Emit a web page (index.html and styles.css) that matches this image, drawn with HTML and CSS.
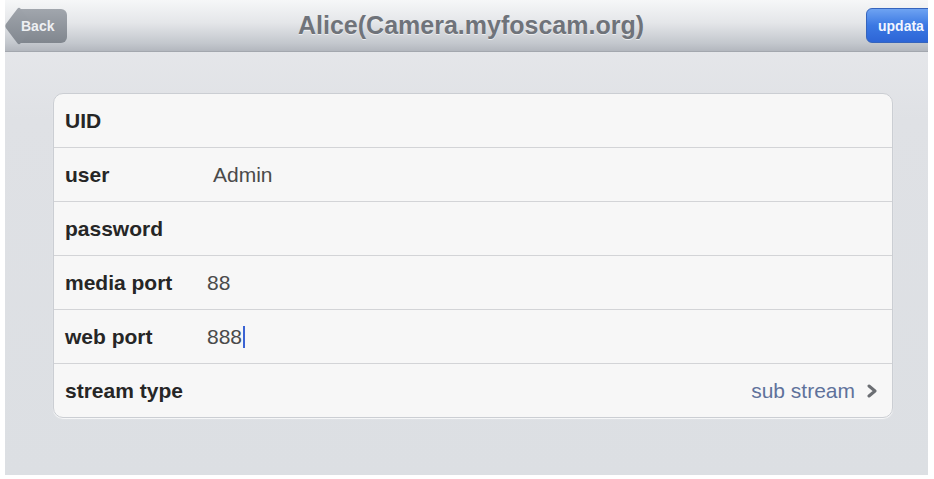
FILE: index.html
```html
<!DOCTYPE html>
<html lang="en">
<head>
    <meta charset="UTF-8">
    <meta name="viewport" content="width=device-width, initial-scale=1.0">
    <title>Camera Settings</title>
    <link rel="stylesheet" href="styles.css">
</head>
<body>
    <div class="screen">
        <div class="navbar">
            <div class="nav-left">
                <button class="back-button">Back</button>
            </div>
            <div class="nav-title">Alice(Camera.myfoscam.org)</div>
            <div class="nav-right">
                <button class="update-button">updata</button>
            </div>
        </div>

        <div class="settings">
            <div class="row">
                <span class="label">UID</span>
            </div>
            <div class="row">
                <span class="label">user</span>
                <span class="value value-shift">Admin</span>
            </div>
            <div class="row">
                <span class="label">password</span>
            </div>
            <div class="row">
                <span class="label">media port</span>
                <span class="value">88</span>
            </div>
            <div class="row">
                <span class="label">web port</span>
                <span class="value">888<span class="caret"></span></span>
            </div>
            <div class="row">
                <span class="label">stream type</span>
                <span class="detail">sub stream</span>
                <svg class="chevron" width="12" height="14" viewBox="0 0 12 14">
                    <path d="M3 2 L9 7 L3 12" fill="none" stroke="#6b6e73" stroke-width="3" stroke-linecap="round" stroke-linejoin="round"/>
                </svg>
            </div>
        </div>
    </div>
</body>
</html>
```

FILE: styles.css
```css
body {
    margin: 0;
    background: #ffffff;
    font-family: 'Liberation Sans', Arial, sans-serif;
}
.screen {
    width: 923px;
    height: 475px;
    margin-left: 5px;
    overflow: hidden;
    background: linear-gradient(180deg, #e9eaed 0px, #dfe1e5 120px, #dcdfe3 100%);
}
.navbar {
    height: 51px;
    display: grid;
    grid-template-columns: 1fr auto 1fr;
    align-items: center;
    background: linear-gradient(180deg, #f6f7f8 0%, #e4e6e9 45%, #c3c7cd 85%, #b3b7be 100%);
    border-bottom: 1px solid #a3a7ae;
}
.nav-left {
    display: flex;
    padding-left: 13px;
}
.nav-right {
    display: flex;
    justify-content: flex-end;
    margin-right: -12px;
}
.back-button {
    position: relative;
    z-index: 0;
    height: 34px;
    width: 49px;
    padding: 0 0 0 3px;
    border: none;
    border-radius: 0 6px 6px 0;
    background: linear-gradient(180deg, #a1a6ad, #80868e);
    color: #eef0f3;
    font-family: 'Liberation Sans', Arial, sans-serif;
    font-size: 14px;
    font-weight: bold;
    text-align: left;
}
.back-button::before {
    content: "";
    position: absolute;
    left: -11px;
    top: 5px;
    width: 24px;
    height: 24px;
    border-radius: 3px;
    transform: rotate(45deg) skew(8deg, 8deg);
    background: linear-gradient(135deg, #a1a6ad, #80868e);
    z-index: -1;
}
.nav-title {
    padding-left: 9px;
    font-size: 25px;
    font-weight: bold;
    color: #6f737a;
    text-shadow: 0 1px 0 rgba(255, 255, 255, 0.6);
}
.update-button {
    height: 35px;
    width: 74px;
    padding: 0 0 0 11px;
    border: 1px solid #3564bd;
    border-radius: 6px;
    background: linear-gradient(180deg, #6ea3f2, #3b78e3 50%, #2d65d6);
    color: #f2f6ff;
    font-family: 'Liberation Sans', Arial, sans-serif;
    font-size: 14px;
    font-weight: bold;
    text-align: left;
}
.settings {
    margin: 41px 35px 0 48px;
    background: #f7f7f7;
    border: 1px solid #cbced3;
    border-radius: 10px;
    box-shadow: 0 1px 1px rgba(255, 255, 255, 0.8);
}
.row {
    height: 53px;
    display: flex;
    align-items: center;
    padding: 0 14px 0 11px;
    border-bottom: 1px solid #d3d4d7;
}
.row:last-child {
    border-bottom: none;
}
.label {
    width: 142px;
    flex-shrink: 0;
    font-size: 21px;
    font-weight: bold;
    color: #262626;
}
.value {
    font-size: 21px;
    color: #4a4a4a;
    display: flex;
    align-items: center;
}
.value-shift {
    margin-left: 6px;
}
.caret {
    display: inline-block;
    width: 2px;
    height: 22px;
    margin-left: 1px;
    background: #3a63d4;
}
.detail {
    margin-left: auto;
    font-size: 21px;
    color: #5f729b;
}
.chevron {
    margin-left: 11px;
}
```
